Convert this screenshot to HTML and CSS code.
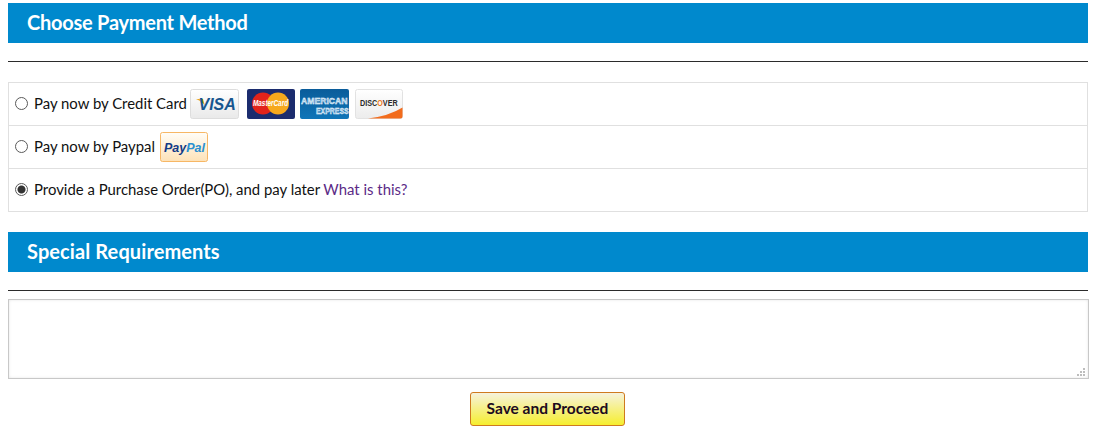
FILE: index.html
```html
<!DOCTYPE html>
<html lang="en">
<head>
<meta charset="utf-8">
<title>Payment</title>
<link rel="stylesheet" href="styles.css">
</head>
<body>
<h2 class="bar bar-first">Choose Payment Method</h2>
<hr class="rule">
<div class="methods">
  <label class="method">
    <input type="radio" name="pay" class="radio">
    <span class="label">Pay now by Credit Card</span>
    <span class="cards">
      <svg class="card" width="49" height="30" viewBox="0 0 49 30">
        <defs><linearGradient id="gv" x1="0" y1="0" x2="0" y2="1"><stop offset="0" stop-color="#ffffff"/><stop offset="1" stop-color="#e9e9e9"/></linearGradient></defs>
        <rect x=".5" y=".5" width="48" height="29" rx="2" fill="url(#gv)" stroke="#dddddd"/>
        <path d="M6 10h7l2 7q-2-4-9-7z" fill="#e8a920"/>
        <text x="8.500" y="21" class="t-visa">VISA</text>
      </svg>
      <svg class="card card-mc" width="48" height="30" viewBox="0 0 48 30">
        <rect width="48" height="30" rx="2" fill="#1b2c6e"/>
        <circle cx="16" cy="14.500" r="11" fill="#e2231a"/>
        <circle cx="31" cy="14.500" r="11" fill="#f6a81c"/>
        <text transform="translate(6 17) scale(.75 1)" class="t-mc">MasterCard</text>
      </svg>
      <svg class="card" width="49" height="30" viewBox="0 0 49 30">
        <defs><linearGradient id="ga" x1="0" y1="0" x2="0" y2="1"><stop offset="0" stop-color="#0a5c9a"/><stop offset="1" stop-color="#0f75b8"/></linearGradient></defs>
        <rect width="49" height="30" rx="2" fill="url(#ga)"/>
        <text transform="translate(1 14.500) scale(.96 1)" class="t-amex">AMERICAN</text>
        <text transform="translate(16 24.500) scale(.77 1)" class="t-amex">EXPRESS</text>
      </svg>
      <svg class="card card-last" width="48" height="30" viewBox="0 0 48 30">
        <defs><linearGradient id="gd" x1="0" y1="0" x2="0" y2="1"><stop offset="0" stop-color="#ffffff"/><stop offset="1" stop-color="#ececec"/></linearGradient></defs>
        <rect x=".5" y=".5" width="47" height="29" rx="2" fill="url(#gd)" stroke="#e2e2e2"/>
        <path d="M13 29.500Q34 27 47.500 18.500V27.500a2 2 0 0 1-2 2z" fill="#f26c1d"/>
        <text transform="translate(5 17) scale(.85 1)" class="t-disc">DISC<tspan class="t-disc-o">O</tspan>VER</text>
      </svg>
    </span>
  </label>
  <label class="method">
    <input type="radio" name="pay" class="radio">
    <span class="label">Pay now by Paypal</span>
    <span class="cards cards-paypal">
      <svg class="card" width="48" height="30" viewBox="0 0 48 30">
        <defs><linearGradient id="gp" x1="0" y1="0" x2="0" y2="1"><stop offset="0" stop-color="#fffdf8"/><stop offset="1" stop-color="#fde2b8"/></linearGradient></defs>
        <rect x=".5" y=".5" width="47" height="29" rx="2" fill="url(#gp)" stroke="#f7b765"/>
        <text x="4" y="20" class="t-pp">Pay<tspan class="t-pp-pal">Pal</tspan></text>
      </svg>
    </span>
  </label>
  <label class="method">
    <input type="radio" name="pay" class="radio" checked>
    <span class="label">Provide a Purchase Order(PO), and pay later <a class="what" href="#">What is this?</a></span>
  </label>
</div>
<h2 class="bar bar-second">Special Requirements</h2>
<hr class="rule">
<div class="notes-wrap">
  <textarea class="notes"></textarea>
  <svg class="grip" width="8" height="8" viewBox="0 0 8 8">
    <rect x="6" y="0" width="2" height="2"/>
    <rect x="3" y="3" width="2" height="2"/><rect x="6" y="3" width="2" height="2"/>
    <rect x="0" y="6" width="2" height="2"/><rect x="3" y="6" width="2" height="2"/><rect x="6" y="6" width="2" height="2"/>
  </svg>
</div>
<div class="actions"><button type="button" class="save">Save and Proceed</button></div>
</body>
</html>
```
FILE: styles.css
```css
* { box-sizing: border-box; }
html, body { margin: 0; background: #fff; }
body {
  padding: 3px 7px 0 8px;
  font-family: "Lato", "Open Sans", sans-serif;
  font-size: 14.900px;
  color: #111;
  overflow: hidden;
}
.bar {
  margin: 0;
  height: 40px;
  padding-left: 19px;
  line-height: 38px;
  background: #0089cd;
  color: #fff;
  font-size: 20px;
  font-weight: 700;
}
.bar-first { letter-spacing: -0.25px; }
.bar-second { margin-top: 20px; letter-spacing: 0.1px; }
.rule {
  margin: 18px 0 0;
  border: 0;
  height: 1px;
  background: #2b2b2b;
}
.methods {
  margin-top: 20px;
  border: 1px solid #e0e0e0;
}
.method {
  display: flex;
  align-items: center;
  height: 43px;
  padding-left: 6px;
  border-bottom: 1px solid #e0e0e0;
}
.method:last-child { height: 42px; border-bottom: 0; }
.label { padding-bottom: 2px; }
.radio {
  appearance: none;
  margin: 0 6px 2px 0;
  width: 13px;
  height: 13px;
  flex: none;
  border: 1px solid #5a5a5a;
  border-radius: 50%;
  background: #fff;
}
.radio:checked {
  background: radial-gradient(circle, #333 0, #333 3.500px, #fff 4.500px);
}
.cards {
  display: flex;
  align-items: center;
  gap: 5px;
  margin-left: 3px;
}
.cards-paypal { margin-left: 5px; }
.card { display: block; }
.card-mc { margin-left: 3px; }
.card-last { margin-left: 1px; }
.what { color: #5b2a86; text-decoration: none; }
.t-visa { font: italic 700 16px "Liberation Sans", sans-serif; fill: #17568f; }
.t-mc { font: italic 700 8.500px "Liberation Sans", sans-serif; fill: #fff; }
.t-amex { font: 700 9px "Liberation Sans", sans-serif; fill: #8fc0e4; stroke: #fff; stroke-width: .4px; }
.t-disc { font: 700 8.500px "Liberation Sans", sans-serif; fill: #2a2a2a; }
.t-disc-o { fill: #f07a1a; }
.t-pp { font: italic 700 12.500px "Liberation Sans", sans-serif; fill: #123b87; }
.t-pp-pal { fill: #2a8fd0; }
.notes-wrap {
  position: relative;
  margin-top: 8px;
  width: 1081px;
  height: 80px;
}
.notes {
  display: block;
  width: 100%;
  height: 100%;
  padding: 2px;
  border: 1px solid #c8c8c8;
  box-shadow: inset 0 0 3px #e4e4e4;
  background: #fff;
  resize: none;
}
.grip {
  position: absolute;
  right: 4px;
  bottom: 3px;
  fill: #bdbdbd;
}
.actions {
  display: flex;
  justify-content: center;
  margin-top: 13px;
}
.save {
  width: 155px;
  height: 34px;
  margin-right: 1px;
  padding: 0 0 2px;
  border: 1px solid #cf7a1e;
  border-radius: 3px;
  background: linear-gradient(#f6f2dc, #f6ee2e);
  font-family: "Lato", sans-serif;
  font-size: 15.500px;
  font-weight: 700;
  color: #1c0a20;
}
```
